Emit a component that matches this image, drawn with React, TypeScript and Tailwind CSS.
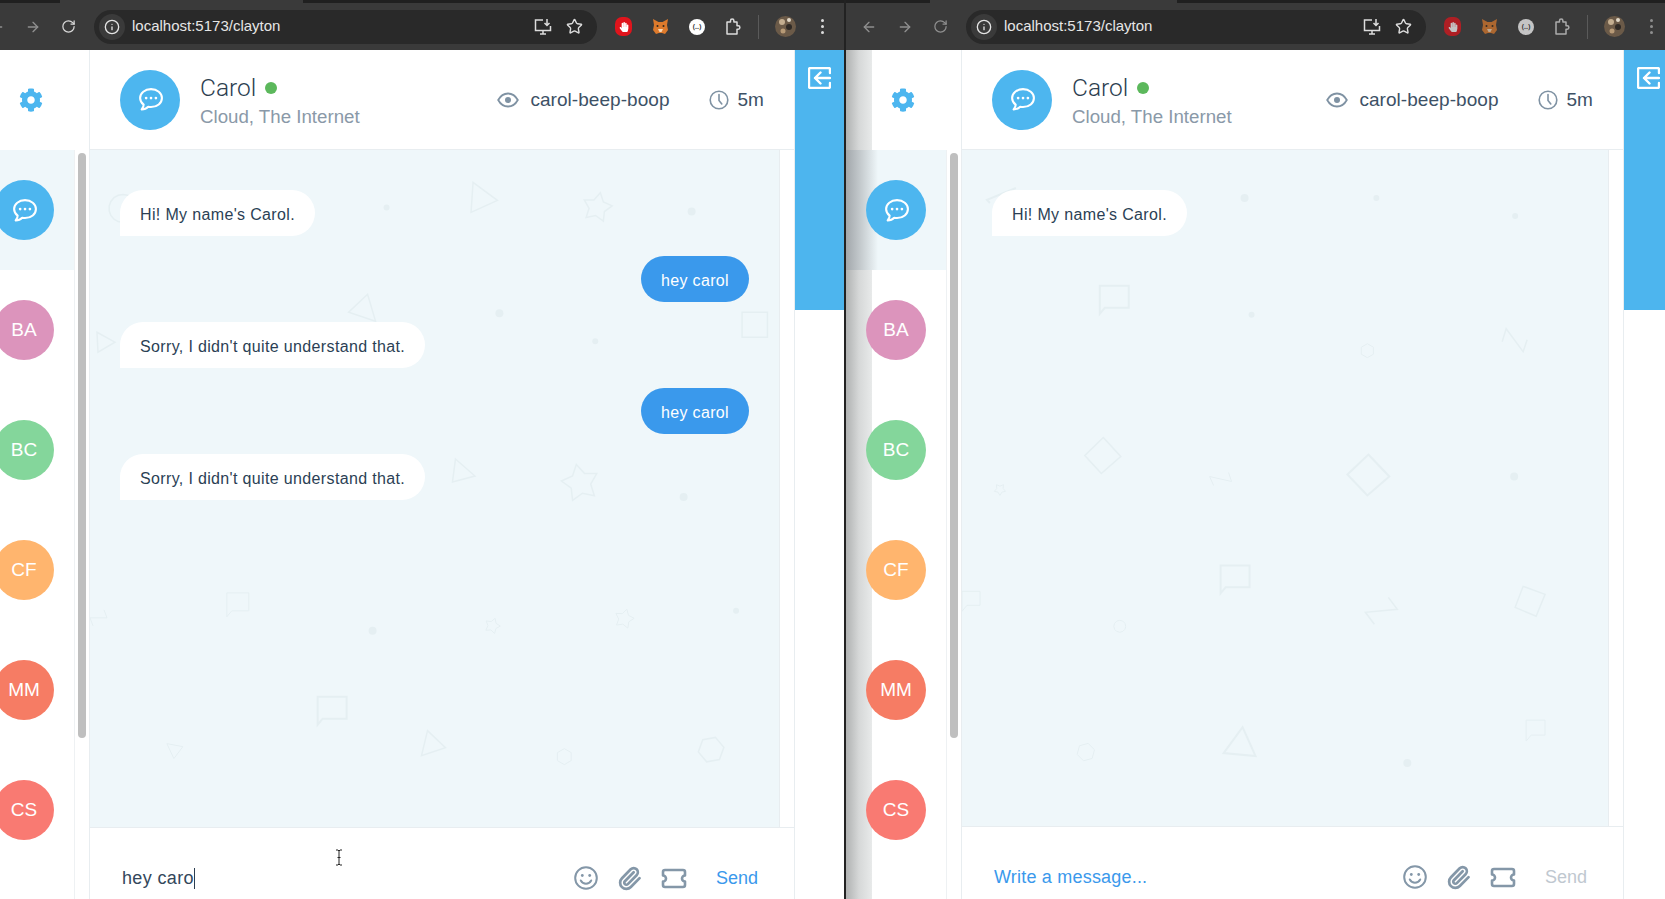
import { FaCog, FaHandPaper } from "react-icons/fa";
import { Info, Paperclip, Star, ArrowLeft, ArrowRight, RotateCw } from "lucide-react";

type Shape =
  | { k: "poly"; pts: number[]; w?: number; open?: boolean }
  | { k: "dot"; x: number; y: number; r: number }
  | { k: "star"; x: number; y: number; r: number; w?: number; rot?: number }
  | { k: "hex"; x: number; y: number; r: number; w?: number; rot?: number; n?: number }
  | { k: "speech"; x: number; y: number; w: number; h: number; sw?: number };

const leftShapes: Shape[] = [
  { k: "hex", x: 123, y: 208, r: 14, n: 18, w: 1.5 },
  { k: "poly", pts: [473.6, 182, 498, 200, 471.6, 212], w: 1.5 },
  { k: "dot", x: 387, y: 207, r: 3 },
  { k: "star", x: 598, y: 207, r: 15, w: 1.5, rot: 12 },
  { k: "dot", x: 692.5, y: 211, r: 4 },
  { k: "poly", pts: [368, 294, 349, 312, 376, 321], w: 1.5 },
  { k: "dot", x: 500, y: 313, r: 4 },
  { k: "dot", x: 596, y: 341, r: 3 },
  { k: "poly", pts: [743, 312, 768.4, 312, 768.4, 337, 743, 337], w: 1.5 },
  { k: "poly", pts: [97, 332, 115, 342, 98, 352], w: 1.5 },
  { k: "poly", pts: [456, 459, 475.5, 476, 453, 482], w: 1.5 },
  { k: "star", x: 581, y: 483, r: 19, w: 1.5, rot: -12 },
  { k: "dot", x: 684.5, y: 497, r: 4 },
  { k: "poly", pts: [93, 626, 90, 618, 107, 618, 104, 610], w: 1, open: true },
  { k: "speech", x: 227, y: 593, w: 22, h: 18, sw: 1 },
  { k: "dot", x: 373, y: 631, r: 4 },
  { k: "star", x: 493, y: 626, r: 8, w: 1, rot: 20 },
  { k: "star", x: 625, y: 619, r: 10, w: 1, rot: 15 },
  { k: "dot", x: 737, y: 611, r: 3 },
  { k: "speech", x: 318, y: 697, w: 29, h: 22, sw: 2 },
  { k: "poly", pts: [167, 744, 183, 747, 174, 759], w: 1 },
  { k: "poly", pts: [428, 731, 446, 748, 422, 756], w: 1.5 },
  { k: "hex", x: 565, y: 757, r: 8, w: 1 },
  { k: "hex", x: 712, y: 750, r: 13, w: 1.5, rot: 20 },
];

const rightShapes: Shape[] = [
  { k: "poly", pts: [1016, 188, 987, 200, 990, 203], w: 2, open: true },
  { k: "dot", x: 1245, y: 198, r: 4 },
  { k: "dot", x: 1377, y: 198, r: 3 },
  { k: "dot", x: 1516, y: 216, r: 3 },
  { k: "speech", x: 1100, y: 286, w: 29, h: 22, sw: 2 },
  { k: "dot", x: 1252, y: 315, r: 3 },
  { k: "hex", x: 1368, y: 351, r: 7, w: 1 },
  { k: "poly", pts: [1503, 342, 1507, 329, 1524, 352, 1528, 340], w: 1.5, open: true },
  { k: "poly", pts: [1103.5, 438, 1121, 457, 1101.5, 474, 1085, 456], w: 1.5 },
  { k: "poly", pts: [1214, 486, 1210, 477, 1232, 482, 1229, 473], w: 1, open: true },
  { k: "poly", pts: [1369, 455, 1390, 477, 1368, 496, 1348, 475], w: 2 },
  { k: "dot", x: 1515, y: 477, r: 4 },
  { k: "star", x: 1000, y: 490, r: 6, w: 1, rot: 36 },
  { k: "speech", x: 1221, y: 566, w: 29, h: 22, sw: 2 },
  { k: "speech", x: 962, y: 592, w: 18, h: 14, sw: 1 },
  { k: "hex", x: 1120, y: 627, r: 6, n: 12, w: 1 },
  { k: "poly", pts: [1375, 625, 1366, 613, 1398, 610, 1389, 598], w: 1.5, open: true },
  { k: "poly", pts: [1524, 587, 1546, 595, 1537, 617, 1516, 608], w: 1.5 },
  { k: "hex", x: 1086, y: 753, r: 9, w: 1, rot: 15 },
  { k: "poly", pts: [1243, 728, 1256, 757, 1224, 754], w: 2 },
  { k: "dot", x: 1408, y: 764, r: 4 },
  { k: "speech", x: 1527, y: 721, w: 19, h: 15, sw: 1 },
];

function ngon(x: number, y: number, r: number, n: number, rot: number) {
  const pts: string[] = [];
  for (let i = 0; i < n; i++) {
    const a = ((rot + (i * 360) / n - 90) * Math.PI) / 180;
    pts.push(`${x + r * Math.cos(a)},${y + r * Math.sin(a)}`);
  }
  return pts.join(" ");
}

function starPts(x: number, y: number, r: number, rot: number) {
  const pts: string[] = [];
  for (let i = 0; i < 10; i++) {
    const rad = i % 2 ? r * 0.55 : r;
    const a = ((rot + i * 36 - 90) * Math.PI) / 180;
    pts.push(`${x + rad * Math.cos(a)},${y + rad * Math.sin(a)}`);
  }
  return pts.join(" ");
}

function Pattern({ shapes, viewBox }: { shapes: Shape[]; viewBox: string }) {
  const c = "#e5eff2";
  return (
    <svg className="pointer-events-none absolute inset-0 h-full w-full" viewBox={viewBox} fill="none">
      {shapes.map((s, i) => {
        if (s.k === "dot") return <circle key={i} cx={s.x} cy={s.y} r={s.r} fill={c} />;
        if (s.k === "star")
          return <polygon key={i} points={starPts(s.x, s.y, s.r, s.rot ?? 0)} stroke={c} strokeWidth={s.w ?? 1} />;
        if (s.k === "hex")
          return <polygon key={i} points={ngon(s.x, s.y, s.r, s.n ?? 6, s.rot ?? 0)} stroke={c} strokeWidth={s.w ?? 1} />;
        if (s.k === "speech") {
          const { x, y, w, h } = s;
          const d = `M${x} ${y}H${x + w}V${y + h}H${x + 5}L${x} ${y + h + 6}Z`;
          return <path key={i} d={d} stroke={c} strokeWidth={s.sw ?? 1} />;
        }
        const p = s.pts.join(" ");
        return s.open ? (
          <polyline key={i} points={p} stroke={c} strokeWidth={s.w ?? 1} />
        ) : (
          <polygon key={i} points={p} stroke={c} strokeWidth={s.w ?? 1} />
        );
      })}
    </svg>
  );
}

function ChatGlyph() {
  return (
    <svg width="27" height="25" viewBox="0 0 26 24" fill="none">
      <path
        d="M13.5 2C7.6 2 3 5.8 3 10.6c0 2.6 1.3 4.8 3.4 6.4.1 1.4-.7 3-1.9 4.5 2.6 0 4.8-.9 6.3-2.5.9.2 1.8.3 2.7.3 5.9 0 10.5-3.9 10.5-8.7S19.4 2 13.500 2Z"
        stroke="#fff"
        strokeWidth="2"
        strokeLinejoin="round"
      />
      <circle cx="8.800" cy="10.600" r="1.300" fill="#fff" />
      <circle cx="13.500" cy="10.600" r="1.300" fill="#fff" />
      <circle cx="18.200" cy="10.600" r="1.300" fill="#fff" />
    </svg>
  );
}

function Eye() {
  return (
    <svg width="22" height="16" viewBox="0 0 22 16" fill="none" stroke="#7f92a3" strokeWidth="1.800">
      <path d="M1.200 8C3.500 3.800 7 1.500 11 1.500S18.500 3.800 20.800 8c-2.300 4.200-5.800 6.500-9.800 6.500S3.500 12.200 1.200 8Z" />
      <circle cx="11" cy="8" r="3" fill="#7f92a3" stroke="none" />
    </svg>
  );
}

function Clock() {
  return (
    <svg width="20" height="20" viewBox="0 0 20 20" fill="none" stroke="#7f92a3" strokeWidth="1.600" strokeLinecap="round">
      <circle cx="10" cy="10" r="8.800" />
      <path d="M10 4.500V10.500L12.800 14" />
    </svg>
  );
}

function Smile() {
  return (
    <svg width="24" height="24" viewBox="0 0 24 24" fill="none" stroke="#8497a8" strokeWidth="2" strokeLinecap="round">
      <circle cx="12" cy="12" r="10.800" />
      <circle cx="8.300" cy="9.500" r="1.400" fill="#8497a8" stroke="none" />
      <circle cx="15.700" cy="9.500" r="1.400" fill="#8497a8" stroke="none" />
      <path d="M6.800 14.500c1.200 2.200 3 3.300 5.200 3.300s4-1.100 5.200-3.300" />
    </svg>
  );
}

function Ticket() {
  return (
    <svg width="26" height="21" viewBox="0 0 26 21" fill="none" stroke="#8497a8" strokeWidth="2.600" strokeLinejoin="round">
      <path d="M4 2h18c1.100 0 2 .9 2 2v3.500a3 3 0 0 0 0 6V17c0 1.100-.9 2-2 2H4c-1.100 0-2-.9-2-2v-3.500a3 3 0 0 0 0-6V4c0-1.100.9-2 2-2Z" />
    </svg>
  );
}

function ExitIcon() {
  return (
    <svg width="23" height="22" viewBox="0 0 23 22" fill="none" stroke="#fff" strokeWidth="2.400" strokeLinecap="round" strokeLinejoin="round">
      <path d="M22 6V2.500C22 1.700 21.300 1 20.500 1h-18C1.700 1 1 1.700 1 2.500v17c0 .8.7 1.500 1.500 1.500h18c.8 0 1.500-.7 1.500-1.500V16" />
      <path d="M22 11H7M12.500 5.500 7 11l5.500 5.500" />
    </svg>
  );
}

function InstallIcon() {
  return (
    <svg width="18" height="18" viewBox="0 0 18 18" fill="none" stroke="#dcdcdc" strokeWidth="1.500">
      <path d="M9 2H1.500v10.500h15V8" />
      <path d="M6 16h6M9 12.500V16" />
      <path d="M13 1v6M10.500 5 13 7.500 15.500 5" />
    </svg>
  );
}

function PuzzleIcon() {
  return (
    <svg width="16" height="18" viewBox="0 0 16 18" fill="none" stroke="#dcdcdc" strokeWidth="1.500" strokeLinejoin="round">
      <path d="M2 4h3.500V2.800a1.700 1.700 0 0 1 3.400 0V4H12v3.800h1.200a1.700 1.700 0 0 1 0 3.400H12V16H2Z" />
    </svg>
  );
}

function Fox() {
  return (
    <svg width="17" height="17" viewBox="0 0 17 17">
      <path d="M1 1l5.500 3h4L16 1l-1 6 1 5-3 4-3-1H7l-3 1-3-4 1-5Z" fill="#dd7a2c" />
      <path d="M6 11h5l-1.500 3h-2Z" fill="#f6d8b8" />
      <circle cx="5.500" cy="8" r="1" fill="#33261c" />
      <circle cx="11.500" cy="8" r="1" fill="#33261c" />
    </svg>
  );
}

function Profile() {
  return (
    <svg width="21" height="21" viewBox="0 0 21 21">
      <circle cx="10.500" cy="10.500" r="10.500" fill="#6b5a48" />
      <circle cx="7" cy="6" r="3" fill="#c4ae90" />
      <circle cx="14" cy="11" r="3" fill="#2f2a26" />
      <circle cx="8" cy="15" r="2.500" fill="#b79a76" />
      <circle cx="14" cy="4" r="2" fill="#e2d8c8" />
    </svg>
  );
}

function Browser({ pad, pill, dim }: { pad: string; pill: string; dim?: boolean }) {
  return (
    <div className="h-[50px] shrink-0 bg-[#3a3a3a]">
      <div className="flex h-[3px] bg-[#202020]">
        <div className={dim ? "ml-[84px] h-full w-[247px] bg-[#3a3a3a]" : "ml-[60px] h-full w-[243px] bg-[#3a3a3a]"} />
      </div>
      <div className={`flex h-[47px] items-center ${pad}`}>
        <ArrowLeft size={16} className="shrink-0 text-[#8f8f8f]" />
        <ArrowRight size={16} className="ml-[20px] shrink-0 text-[#8f8f8f]" />
        <RotateCw size={15} className={dim ? "ml-[20px] shrink-0 text-[#8f8f8f]" : "ml-[20px] shrink-0 text-[#d8d8d8]"} />
        <div className={`ml-[18px] flex h-[34px] shrink-0 items-center rounded-full bg-[#292929] pl-[5px] pr-[14px] ${pill}`}>
          <div className="flex h-[26px] w-[26px] items-center justify-center rounded-full bg-[#3a3a3a]">
            <Info size={16} className="text-[#e4e4e4]" />
          </div>
          <span className="ml-[7px] font-['Liberation_Sans',sans-serif] text-[15px] text-[#e6e6e6]">localhost:5173/clayton</span>
          <div className="ml-auto flex items-center gap-[14px]">
            <InstallIcon />
            <Star size={17} className="text-[#dcdcdc]" />
          </div>
        </div>
        <div className={dim ? "ml-[18px] flex shrink-0 items-center gap-[20px] opacity-70" : "ml-[18px] flex shrink-0 items-center gap-[20px]"}>
          <div className="flex h-[19px] w-[17px] items-center justify-center rounded-[7px] bg-[#e0141c]">
            <FaHandPaper size={10} className="text-white" />
          </div>
          <Fox />
          <div className="flex h-[16px] w-[16px] items-center justify-center rounded-full bg-white text-[7px] font-bold leading-none text-[#333]">
            (..)
          </div>
          <PuzzleIcon />
        </div>
        <div className="ml-[17px] h-[24px] w-px shrink-0 bg-[#5a5a5a]" />
        <div className="ml-[16px] shrink-0">
          <Profile />
        </div>
        <div className="ml-[25px] flex shrink-0 flex-col gap-[3px]">
          <div className={dim ? "h-[3px] w-[3px] rounded-full bg-[#8f8f8f]" : "h-[3px] w-[3px] rounded-full bg-[#dcdcdc]"} />
          <div className={dim ? "h-[3px] w-[3px] rounded-full bg-[#8f8f8f]" : "h-[3px] w-[3px] rounded-full bg-[#dcdcdc]"} />
          <div className={dim ? "h-[3px] w-[3px] rounded-full bg-[#8f8f8f]" : "h-[3px] w-[3px] rounded-full bg-[#dcdcdc]"} />
        </div>
      </div>
    </div>
  );
}

const contacts = [
  { label: "BA", color: "bg-[#dc94bc]" },
  { label: "BC", color: "bg-[#84d69b]" },
  { label: "CF", color: "bg-[#ffb56e]" },
  { label: "MM", color: "bg-[#f67c64]" },
  { label: "CS", color: "bg-[#f97a72]" },
];

function Sidebar({ width }: { width: string }) {
  return (
    <aside className={`flex shrink-0 flex-col overflow-hidden border-r border-[#e8edf0] ${width}`}>
      <div className="flex h-[100px] shrink-0 items-center justify-end pr-[46px]">
        <FaCog size={24} className="text-[#4db6ef]" />
      </div>
      <div className="flex min-h-0 flex-1">
        <div className="min-w-0 flex-1 border-r border-[#eef1f3]">
          <div className="flex h-[120px] items-center justify-end bg-[#eff7fa] pr-[20px]">
            <div className="relative z-10 flex h-[60px] w-[60px] shrink-0 items-center justify-center rounded-full bg-[#4db6ef]">
              <ChatGlyph />
            </div>
          </div>
          {contacts.map((c) => (
            <div key={c.label} className="flex h-[120px] items-center justify-end pr-[20px]">
              <div
                className={`relative z-10 flex h-[60px] w-[60px] shrink-0 items-center justify-center rounded-full font-['Liberation_Sans',sans-serif] text-[19px] text-white ${c.color}`}
              >
                {c.label}
              </div>
            </div>
          ))}
        </div>
        <div className="w-[14px] shrink-0 pl-[3px] pt-[3px]">
          <div className="h-[585px] w-[8px] rounded-full bg-[#bfbfbf]" />
        </div>
      </div>
    </aside>
  );
}

function Header() {
  return (
    <header className="flex h-[100px] shrink-0 items-center border-b border-[#e8edf0] pl-[30px] pr-[30px]">
      <div className="flex h-[60px] w-[60px] shrink-0 items-center justify-center rounded-full bg-[#4db6ef]">
        <ChatGlyph />
      </div>
      <div className="ml-[20px]">
        <div className="flex items-center gap-[9px]">
          <span className="font-['Roboto',sans-serif] text-[24.500px] font-light leading-[34px] text-[#2c3e50]">Carol</span>
          <span className="h-[12px] w-[12px] rounded-full bg-[#5cb85c]" />
        </div>
        <div className="text-[18.700px] leading-[24px] text-[#8a99a8]">Cloud, The Internet</div>
      </div>
      <div className="ml-auto flex items-center pt-[1px] text-[19px] tracking-[0.05px] text-[#3d5166]">
        <Eye />
        <span className="ml-[11px]">carol-beep-boop</span>
        <div className="ml-[39px]">
          <Clock />
        </div>
        <span className="ml-[9px]">5m</span>
      </div>
    </header>
  );
}

function Bubble({ text, me }: { text: string; me?: boolean }) {
  return me ? (
    <div className="flex h-[46px] items-center self-end rounded-[23px] bg-[#3a99ec] px-[20px] pt-[3px] text-[16px] tracking-[0.35px] text-white">
      {text}
    </div>
  ) : (
    <div className="flex h-[46px] items-center self-start rounded-[23px] rounded-bl-none bg-white px-[20px] pt-[3px] text-[16px] tracking-[0.35px] text-[#2b3f55]">
      {text}
    </div>
  );
}

function Window({
  messages,
  shapes,
  viewBox,
  children,
  composerHeight,
  send,
}: {
  messages: { text: string; me?: boolean }[];
  shapes: Shape[];
  viewBox: string;
  children: React.ReactNode;
  composerHeight: string;
  send: string;
}) {
  return (
    <main className="flex h-full min-w-0 flex-1 flex-col border-r border-[#e8edf0] font-['Liberation_Sans',sans-serif]">
      <Header />
      <div className="flex min-h-0 flex-1">
        <div className="relative min-w-0 flex-1 overflow-hidden border-r border-[#e8edf0] bg-[#eff7fa]">
          <Pattern shapes={shapes} viewBox={viewBox} />
          <div className="relative flex flex-col gap-[20px] pl-[30px] pr-[30px] pt-[40px]">
            {messages.map((m, i) => (
              <Bubble key={i} text={m.text} me={m.me} />
            ))}
          </div>
        </div>
        <div className="w-[14px] shrink-0" />
      </div>
      <div className={`relative flex shrink-0 items-start border-t border-[#e8edf0] pr-[36px] pt-[38px] ${composerHeight}`}>
        {children}
        <div className="ml-auto flex h-[24px] items-center">
          <Smile />
          <Paperclip size={25} strokeWidth={2.600} className="ml-[19px] text-[#8497a8]" />
          <div className="ml-[19px]">
            <Ticket />
          </div>
          <span className={`ml-[29px] text-[18px] ${send}`}>Send</span>
        </div>
      </div>
    </main>
  );
}

function SidePanel({ width }: { width: string }) {
  return (
    <div className={`h-full shrink-0 ${width}`}>
      <div className="h-[260px] bg-[#4db5ee] pl-[13px] pt-[17px]">
        <ExitIcon />
      </div>
    </div>
  );
}

const leftMessages = [
  { text: "Hi! My name's Carol." },
  { text: "hey carol", me: true },
  { text: "Sorry, I didn't quite understand that." },
  { text: "hey carol", me: true },
  { text: "Sorry, I didn't quite understand that." },
];

export default function App() {
  return (
    <div className="flex h-[899px] w-[1665px] overflow-hidden bg-white">
      <section className="flex h-full w-[844px] shrink-0 flex-col overflow-hidden">
        <Browser pad="-ml-[11px]" pill="w-[503px]" />
        <div className="flex min-h-0 flex-1">
          <Sidebar width="w-[90px]" />
          <Window
            messages={leftMessages}
            shapes={leftShapes}
            viewBox="90 150 690 677"
            composerHeight="h-[72px] pl-[32px]"
            send="text-[#3a99ec]"
          >
            <div className="relative flex h-[24px] items-center text-[18px] tracking-[0.35px] text-[#33475b]">
              hey caro
              <span className="h-[21px] w-px bg-[#2c3e50]" />
            </div>
            <svg className="absolute left-[244px] top-[21px]" width="10" height="17" viewBox="0 0 10 17" fill="none" stroke="#222" strokeWidth="1">
              <path d="M2 1h2l1 1 1-1h2M5 2v13M2 16h2l1-1 1 1h2M3.500 8.500h3" />
            </svg>
          </Window>
          <SidePanel width="w-[49px]" />
        </div>
      </section>
      <div className="h-full w-[2px] shrink-0 bg-[#222]" />
      <section className="relative flex h-full min-w-0 flex-1 flex-col overflow-hidden">
        <Browser pad="pl-[15px]" pill="w-[460px]" dim />
        <div className="relative flex min-h-0 flex-1">
          <div className="absolute left-0 top-0 h-full w-[26px] bg-gradient-to-r from-[#b0b2b2] via-[#d6d8d8] to-[#e8eaea]" />
          <div className="absolute left-0 top-[100px] h-[120px] w-[32px] bg-gradient-to-r from-[#a2a7ab] via-[#c8ced1] to-[#eff7fa]" />
          <Sidebar width="w-[116px]" />
          <Window
            messages={[{ text: "Hi! My name's Carol." }]}
            shapes={rightShapes}
            viewBox="962 150 647 677"
            composerHeight="h-[73px] pl-[32px]"
            send="text-[#c0c8d0]"
          >
            <div className="flex h-[24px] items-center text-[18px] tracking-[0.2px] text-[#3a99ec]">Write a message...</div>
          </Window>
          <SidePanel width="w-[41px]" />
        </div>
      </section>
    </div>
  );
}
